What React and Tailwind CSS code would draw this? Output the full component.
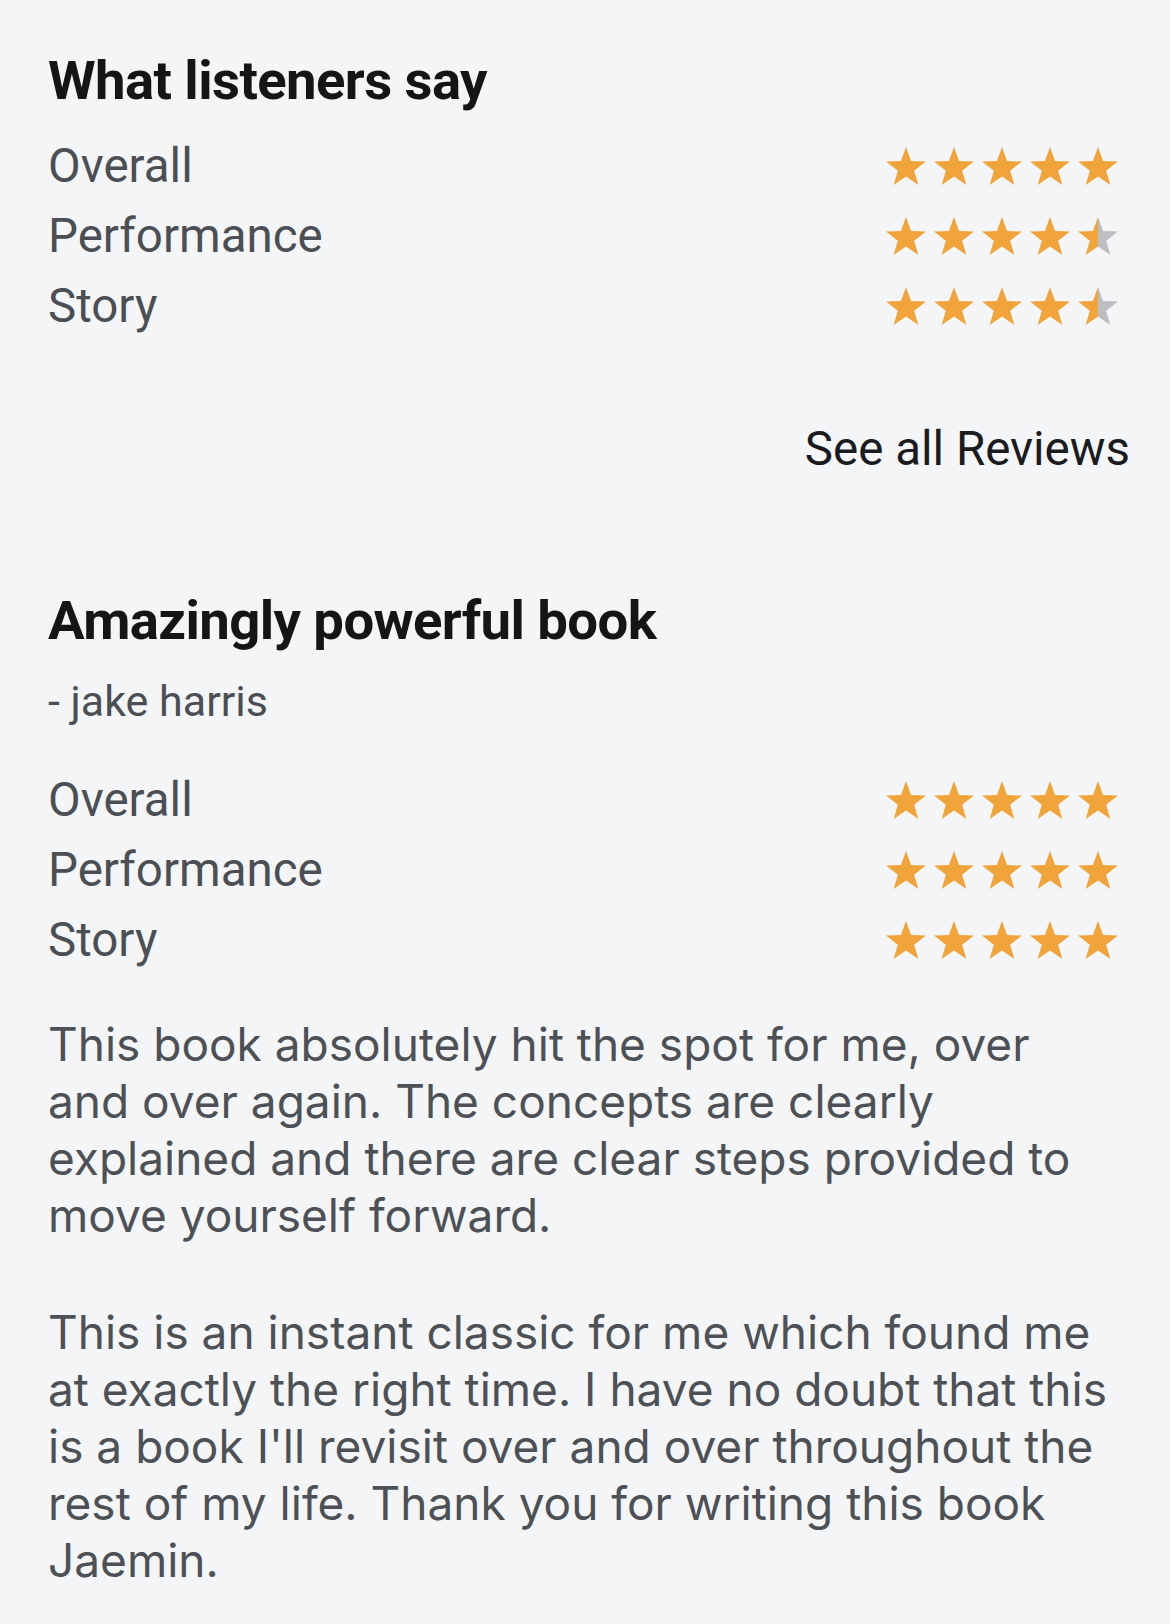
import React from 'react';

const summary = [
  { label: 'Overall', rating: 5 },
  { label: 'Performance', rating: 4.5 },
  { label: 'Story', rating: 4.5 },
];

const review = {
  title: 'Amazingly powerful book',
  author: 'jake harris',
  ratings: [
    { label: 'Overall', rating: 5 },
    { label: 'Performance', rating: 5 },
    { label: 'Story', rating: 5 },
  ],
  body: [
    'This book absolutely hit the spot for me, over and over again. The concepts are clearly explained and there are clear steps provided to move yourself forward.',
    "This is an instant classic for me which found me at exactly the right time. I have no doubt that this is a book I'll revisit over and over throughout the rest of my life. Thank you for writing this book Jaemin.",
  ],
};

const LEFT = '20,0 14.94,14.04 0.03,14.51 11.82,23.66 7.66,37.99 20,29.6';
const RIGHT = '20,0 25.06,14.04 39.97,14.51 28.18,23.66 32.34,37.99 20,29.6';

const Star = ({ fill }) => (
  <svg viewBox="0 0 40 38" className="w-[40px] h-[38px]">
    <polygon points={LEFT} fill={fill >= 0.5 ? '#f0a43a' : '#bdbec1'} />
    <polygon points={RIGHT} fill={fill >= 1 ? '#f0a43a' : '#bdbec1'} />
  </svg>
);

const Stars = ({ rating }) => (
  <div className="flex items-center gap-[8px]">
    {[0, 1, 2, 3, 4].map((i) => (
      <Star key={i} fill={Math.max(0, Math.min(1, rating - i))} />
    ))}
  </div>
);

const RatingRows = ({ rows, className = '' }) => (
  <div className={className}>
    {rows.map((r) => (
      <div key={r.label} className="h-[70px] flex items-center justify-between pr-[12px]">
        <span className="font-['Roboto',sans-serif] text-[47.5px] leading-[70px] text-[#4b4f54]">
          {r.label}
        </span>
        <Stars rating={r.rating} />
      </div>
    ))}
  </div>
);

export default function App() {
  return (
    <div className="min-h-screen bg-[#f4f5f7] pl-[48px] pr-[40px] pt-[48px] pb-[34px]">
      <h2 className="font-['Roboto',sans-serif] font-bold text-[54.5px] leading-[64px] tracking-[-0.6px] text-[#141517]">
        What listeners say
      </h2>
      <RatingRows rows={summary} className="mt-[19px]" />

      <div className="mt-[80px] flex justify-end">
        <a className="font-['Roboto',sans-serif] text-[47.5px] leading-[56px] text-[#1a1b1e]">
          See all Reviews
        </a>
      </div>

      <h3 className="mt-[111px] font-['Roboto',sans-serif] font-bold text-[54.5px] leading-[64px] tracking-[-0.6px] text-[#141517]">
        {review.title}
      </h3>
      <p className="mt-[24px] font-['Roboto',sans-serif] text-[43px] leading-[50px] text-[#4b4f54]">
        - {review.author}
      </p>
      <RatingRows rows={review.ratings} className="mt-[39px]" />

      <div className="mt-[41px] mr-[10px] font-['Inter',sans-serif] text-[46px] leading-[57px] text-[#4d5156]">
        <p>{review.body[0]}</p>
        <p className="mt-[60px]">{review.body[1]}</p>
      </div>
    </div>
  );
}
